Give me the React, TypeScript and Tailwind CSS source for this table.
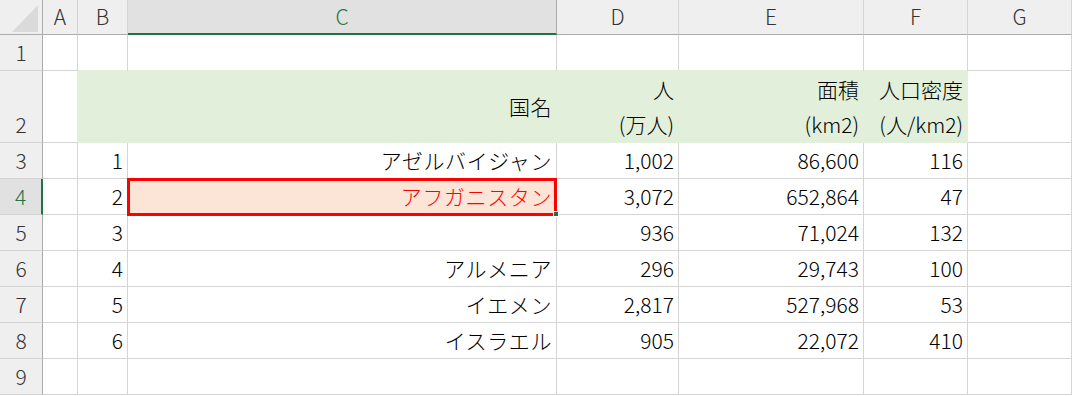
import React from 'react';

const font = { fontFamily: '"Noto Sans CJK JP", "Noto Sans", sans-serif' };

const columns = ['A', 'B', 'C', 'D', 'E', 'F', 'G'];

// rows 3-8: No., country, population (10k), area (km2), density
const rows: [number, string, string, string, string][] = [
  [1, 'アゼルバイジャン', '1,002', '86,600', '116'],
  [2, 'アフガニスタン', '3,072', '652,864', '47'],
  [3, '', '936', '71,024', '132'],
  [4, 'アルメニア', '296', '29,743', '100'],
  [5, 'イエメン', '2,817', '527,968', '53'],
  [6, 'イスラエル', '905', '22,072', '410'],
];

function RowHeader({ n, active = false }: { n: number; active?: boolean }) {
  return (
    <div
      className={
        active
          ? 'flex items-end justify-center bg-[#e1e1e1] border-b border-b-[#d4d4d4] border-r-2 border-r-[#217346] text-[#217346] leading-[35px]'
          : 'flex items-end justify-center bg-[#efefef] border-b border-b-[#d4d4d4] border-r border-r-[#ababab] text-[#333] leading-[35px]'
      }
    >
      {n}
    </div>
  );
}

function Cell({ children, className = '' }: { children?: React.ReactNode; className?: string }) {
  return (
    <div className={`flex items-end justify-end pr-[4px] border-r border-b border-[#d4d4d4] leading-[35px] whitespace-nowrap ${className}`}>
      {children}
    </div>
  );
}

export default function App() {
  return (
    <div
      className="w-[1072px] h-[396px] overflow-hidden bg-white text-[21px] font-light text-black grid grid-cols-[43px_35px_50px_429px_122px_185px_104px_104px] grid-rows-[35px_36px_72px_36px_36px_36px_36px_36px_36px_36px]"
      style={font}
    >
      {/* column headers */}
      <div className="bg-[#efefef] border-r border-b border-[#ababab] flex">
        <svg width="42" height="34" viewBox="0 0 42 34">
          <polygon points="38,5 38,32 12,32" fill="#dadada" />
        </svg>
      </div>
      {columns.map((c) =>
        c === 'C' ? (
          <div
            key={c}
            className="flex justify-center items-start leading-[32px] bg-[#e1e1e1] border-r border-r-[#ababab] border-b-2 border-b-[#217346] text-[#217346]"
          >
            {c}
          </div>
        ) : (
          <div
            key={c}
            className="flex justify-center items-start leading-[32px] bg-[#efefef] border-r border-r-[#d4d4d4] border-b border-b-[#ababab] text-[#333]"
          >
            {c}
          </div>
        )
      )}

      {/* row 1 */}
      <RowHeader n={1} />
      <Cell />
      <Cell className="border-b-[#e2efda]" />
      <Cell className="border-b-[#e2efda]" />
      <Cell className="border-b-[#e2efda]" />
      <Cell className="border-b-[#e2efda]" />
      <Cell className="border-b-[#e2efda]" />
      <Cell />

      {/* row 2 - table header */}
      <RowHeader n={2} />
      <Cell className="border-r-[#e2efda]" />
      <Cell className="bg-[#e2efda] border-[#e2efda]" />
      <Cell className="bg-[#e2efda] border-[#e2efda] !items-center tracking-[0.5px]">国名</Cell>
      <Cell className="bg-[#e2efda] border-[#e2efda] !items-center">
        <div className="flex flex-col items-end">
          <span>人</span>
          <span>(万人)</span>
        </div>
      </Cell>
      <Cell className="bg-[#e2efda] border-[#e2efda] !items-center">
        <div className="flex flex-col items-end">
          <span>面積</span>
          <span>(km2)</span>
        </div>
      </Cell>
      <Cell className="bg-[#e2efda] border-[#e2efda] !items-center">
        <div className="flex flex-col items-end">
          <span>人口密度</span>
          <span>(人/km2)</span>
        </div>
      </Cell>
      <Cell />

      {/* rows 3-8 */}
      {rows.map(([no, name, pop, area, density], i) => {
        const active = i === 1;
        return (
          <React.Fragment key={no}>
            <RowHeader n={i + 3} active={active} />
            <Cell />
            <Cell>{no}</Cell>
            {active ? (
              <div className="relative flex items-end justify-end pr-[4px] border-r border-b border-[#d4d4d4] leading-[35px] tracking-[0.6px] bg-[#fce4d6] text-[#ff0000]">
                {name}
                <div className="absolute left-[-1px] top-[-1px] right-[-1px] bottom-[-2px] border-[3px] border-[#ff0000]" />
                <div className="absolute right-[-3px] bottom-[-3px] w-[6px] h-[6px] bg-[#217346] border border-white" />
              </div>
            ) : (
              <Cell className="tracking-[0.6px]">{name}</Cell>
            )}
            <Cell>{pop}</Cell>
            <Cell>{area}</Cell>
            <Cell>{density}</Cell>
            <Cell />
          </React.Fragment>
        );
      })}

      {/* row 9 */}
      <RowHeader n={9} />
      {columns.map((c) => (
        <Cell key={c} />
      ))}
    </div>
  );
}
